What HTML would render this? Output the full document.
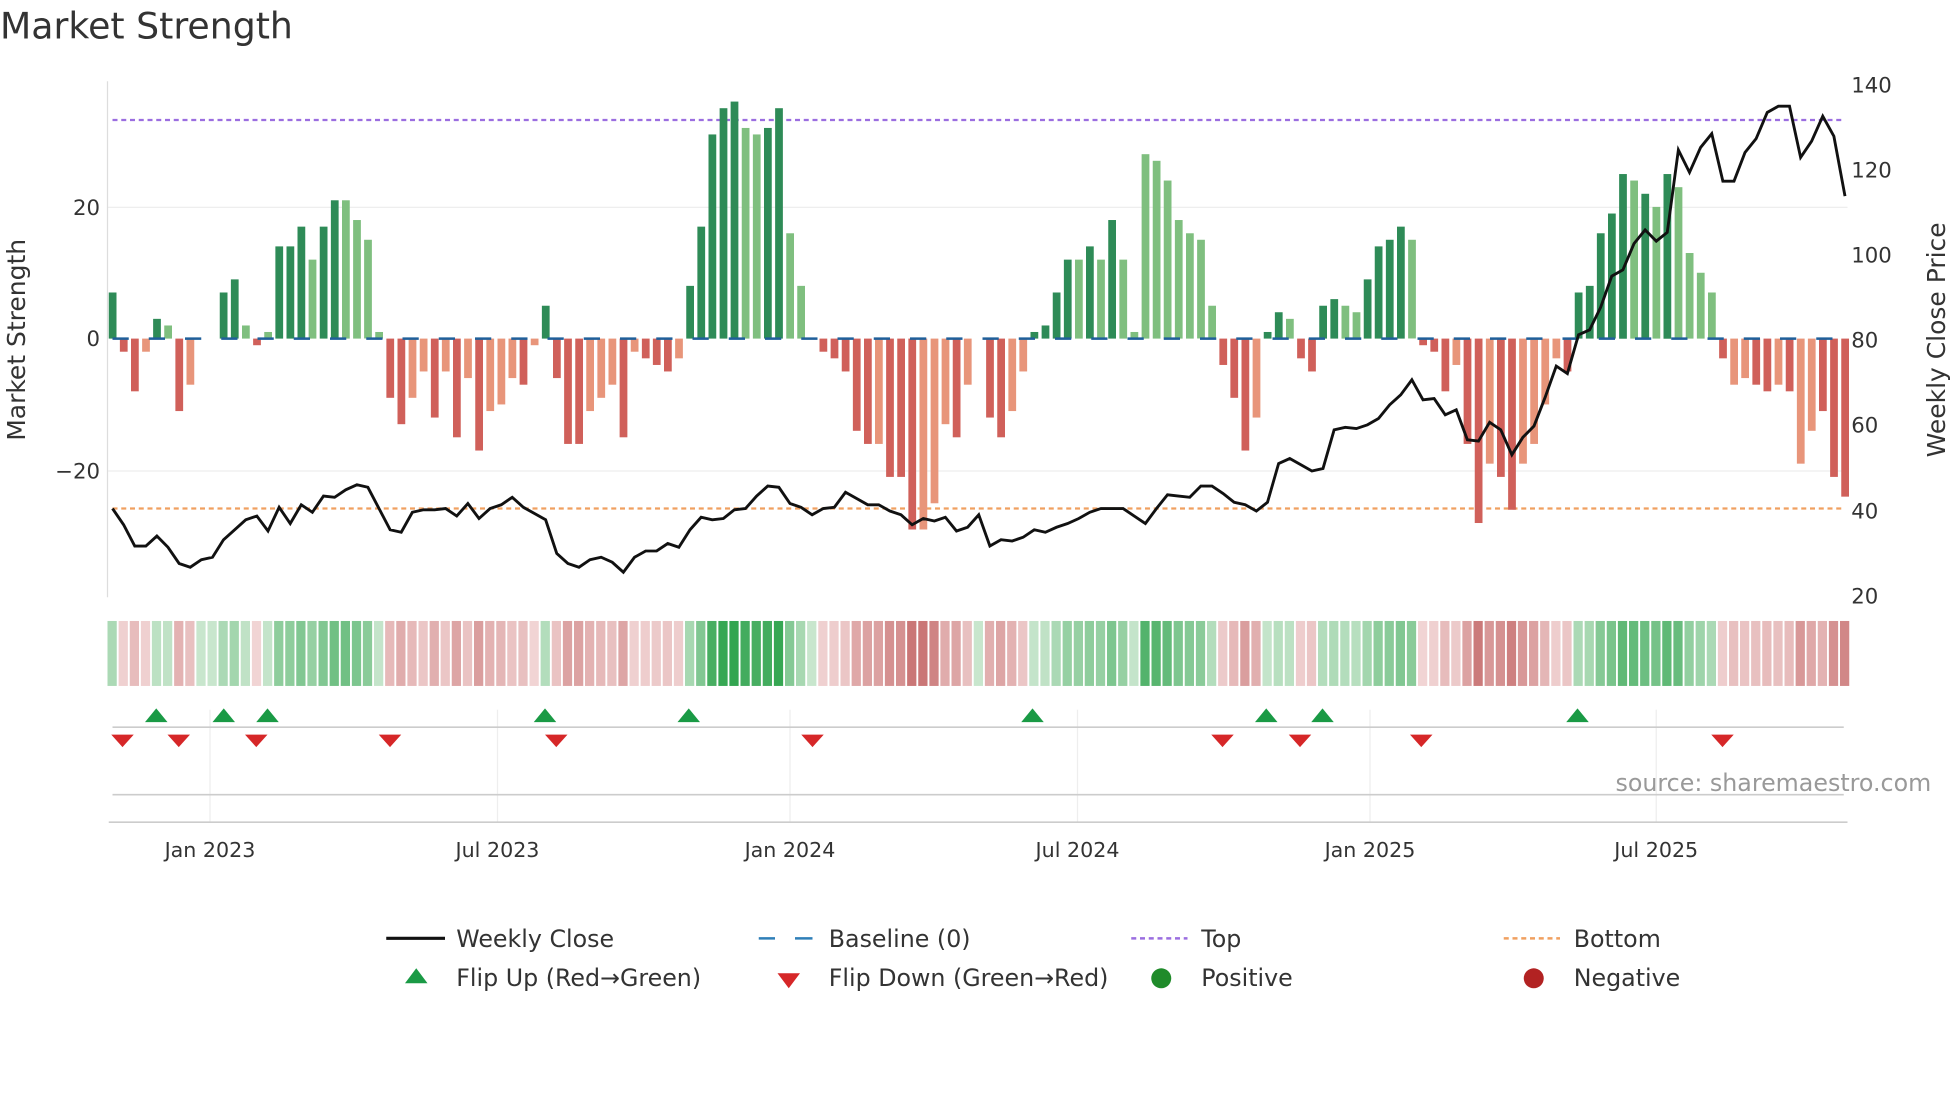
<!DOCTYPE html>
<html><head><meta charset="utf-8"><style>
html,body{margin:0;padding:0;background:#fff;width:1960px;height:1102px;overflow:hidden}
svg text{font-family:"DejaVu Sans","Liberation Sans",sans-serif;fill:#333}
</style></head><body>
<svg id="s" width="1960" height="1102" viewBox="0 0 1568 882" preserveAspectRatio="none" xmlns="http://www.w3.org/2000/svg">
<text x="0" y="31" font-size="29">Market Strength</text>
<g id="g"></g>
<text x="20" y="272" font-size="20" transform="rotate(-90 20 272)" text-anchor="middle">Market Strength</text>
<text x="1556" y="272" font-size="20" transform="rotate(-90 1556 272)" text-anchor="middle">Weekly Close Price</text>
<g font-size="17">
<text x="80" y="172" text-anchor="end">20</text>
<text x="80" y="277" text-anchor="end">0</text>
<text x="80" y="383" text-anchor="end">−20</text>
<text x="1481" y="74">140</text><text x="1481" y="142">120</text><text x="1481" y="210">100</text>
<text x="1481" y="278">80</text><text x="1481" y="346">60</text><text x="1481" y="415">40</text><text x="1481" y="483">20</text>
</g>
<g font-size="16.5" text-anchor="middle">
<text x="168" y="686">Jan 2023</text><text x="398" y="686">Jul 2023</text><text x="632" y="686">Jan 2024</text>
<text x="862" y="686">Jul 2024</text><text x="1096" y="686">Jan 2025</text><text x="1325" y="686">Jul 2025</text>
</g>
<text x="1545" y="633" font-size="19" text-anchor="end" style="fill:#999">source: sharemaestro.com</text>
<g font-size="19">
<line x1="309" y1="751" x2="356" y2="751" stroke="#111" stroke-width="2.5"/><text x="365" y="758">Weekly Close</text>
<line x1="607" y1="751" x2="620" y2="751" stroke="#2f7fb8" stroke-width="2"/><line x1="636" y1="751" x2="650" y2="751" stroke="#2f7fb8" stroke-width="2"/><text x="663" y="758">Baseline (0)</text>
<line x1="905" y1="751" x2="950" y2="751" stroke="#9b6ee0" stroke-width="2" stroke-dasharray="4,3"/><text x="961" y="758">Top</text>
<line x1="1203" y1="751" x2="1248" y2="751" stroke="#f0a060" stroke-width="2" stroke-dasharray="4,3"/><text x="1259" y="758">Bottom</text>
<polygon points="324,787 342,787 333,775" fill="#1a9a45"/><text x="365" y="789">Flip Up (Red→Green)</text>
<polygon points="622,779 640,779 631,791" fill="#d62728"/><text x="663" y="789">Flip Down (Green→Red)</text>
<circle cx="929" cy="783" r="8" fill="#1f8b2a"/><text x="961" y="789">Positive</text>
<circle cx="1227" cy="783" r="8" fill="#b22222"/><text x="1259" y="789">Negative</text>
</g>
</svg>
<script>
var V=[7,-2,-8,-2,3,2,-11,-7,0,0,7,9,2,-1,1,14,14,17,12,17,21,21,18,15,1,-9,-13,-9,-5,-12,-5,-15,-6,-17,-11,-10,-6,-7,-1,5,-6,-16,-16,-11,-9,-7,-15,-2,-3,-4,-5,-3,8,17,31,35,36,32,31,32,35,16,8,0,-2,-3,-5,-14,-16,-16,-21,-21,-29,-29,-25,-13,-15,-7,0,-12,-15,-11,-5,1,2,7,12,12,14,12,18,12,1,28,27,24,18,16,15,5,-4,-9,-17,-12,1,4,3,-3,-5,5,6,5,4,9,14,15,17,15,-1,-2,-8,-4,-16,-28,-19,-21,-26,-19,-16,-10,-3,-5,7,8,16,19,25,24,22,20,25,23,13,10,7,-3,-7,-6,-7,-8,-7,-8,-19,-14,-11,-21,-24];
var L=[0,0,0,1,0,1,0,1,0,0,0,0,1,0,1,0,0,0,1,0,0,1,1,1,1,0,0,1,1,0,1,0,1,0,1,1,1,0,1,0,0,0,0,1,1,1,0,1,0,0,0,1,0,0,0,0,0,1,1,0,0,1,1,0,0,0,0,0,0,1,0,0,0,1,1,1,0,1,0,0,0,1,1,0,0,0,0,1,0,1,0,1,1,1,1,1,1,1,1,1,0,0,0,1,0,0,1,0,0,0,0,1,1,0,0,0,0,1,0,0,0,1,0,0,1,0,0,1,1,1,1,0,0,0,0,0,0,1,0,1,0,1,1,1,1,0,1,1,0,0,1,0,1,1,0,0];
var P=[407,420,437,437,429,438,451,454,448,446,432,424,416,413,425,406,419,404,410,397,398,392,388,390,407,424,426,410,408,408,407,413,403,415,407,404,398,406,411,416,443,451,454,448,446,450,458,446,441,441,435,438,424,414,416,415,408,407,397,389,390,403,406,412,407,406,394,399,404,404,409,412,420,415,417,414,425,422,412,437,432,433,430,424,426,422,419,415,410,407,407,407,413,419,407,396,397,398,389,389,395,402,404,409,402,371,367,372,377,375,344,342,343,340,335,324,316,304,320,319,332,328,352,353,338,344,364,350,341,318,293,299,268,264,246,221,216,195,184,193,186,120,138,118,107,145,145,122,111,90,85,85,126,113,93,109,157];
var n=V.length,x0=90,x1=1476,dx=(x1-x0)/(n-1),h='';
h+='<line x1="86" y1="166" x2="1478" y2="166" stroke="#eee"/><line x1="86" y1="377" x2="1478" y2="377" stroke="#eee"/>';
h+='<line x1="86" y1="65" x2="86" y2="478" stroke="#ddd"/>';
[168,398,632,862,1096,1325].forEach(function(x){h+='<line x1="'+x+'" y1="568" x2="'+x+'" y2="658" stroke="#eee"/>';});
h+='<line x1="90" y1="582" x2="1475" y2="582" stroke="#ccc" stroke-width="1.3"/><line x1="90" y1="636" x2="1475" y2="636" stroke="#ccc" stroke-width="1.3"/><line x1="87" y1="658" x2="1478" y2="658" stroke="#ccc" stroke-width="1.3"/>';
h+='<line x1="90" y1="96" x2="1476" y2="96" stroke="#9b6ee0" stroke-width="1.8" stroke-dasharray="4,3"/>';
h+='<line x1="90" y1="407" x2="1476" y2="407" stroke="#f0a060" stroke-width="1.8" stroke-dasharray="4,3"/>';
for(var i=0;i<n;i++){var x=x0+i*dx,v=V[i],y=271-v*5.27,c;
 if(v>=0)c=L[i]?'#7fbf7f':'#2e8b57';else c=L[i]?'#e8957a':'#d0605a';
 h+='<rect x="'+(x-3).toFixed(1)+'" y="'+Math.min(y,271).toFixed(1)+'" width="6.2" height="'+Math.abs(v*5.27).toFixed(1)+'" fill="'+c+'"/>';
 var a=Math.min(Math.abs(v)/36,1),col;
 if(v>=0){col='rgb('+Math.round(200-150*a)+','+Math.round(230-65*a)+','+Math.round(205-125*a)+')';}
 else{col='rgb('+Math.round(242-50*a)+','+Math.round(215-120*a)+','+Math.round(215-120*a)+')';}
 h+='<rect x="'+(x-4).toFixed(1)+'" y="497" width="7.4" height="52" fill="'+col+'"/>';
}
h+='<line x1="90" y1="271" x2="1476" y2="271" stroke="#1f5f9a" stroke-width="2" stroke-dasharray="13,16"/>';
var pts=[];for(var i=0;i<n;i++)pts.push((x0+i*dx).toFixed(1)+','+P[i]);
h+='<polyline points="'+pts.join(' ')+'" fill="none" stroke="#111" stroke-width="2.3"/>';
[125,179,214,436,551,826,1013,1058,1262].forEach(function(x){h+='<polygon points="'+(x-9)+',578 '+(x+9)+',578 '+x+',567" fill="#1a9a45"/>';});
[98,143,205,312,445,650,978,1040,1137,1378].forEach(function(x){h+='<polygon points="'+(x-9)+',588 '+(x+9)+',588 '+x+',598" fill="#d62728"/>';});
document.getElementById('g').innerHTML=h;
</script>
</body></html>
